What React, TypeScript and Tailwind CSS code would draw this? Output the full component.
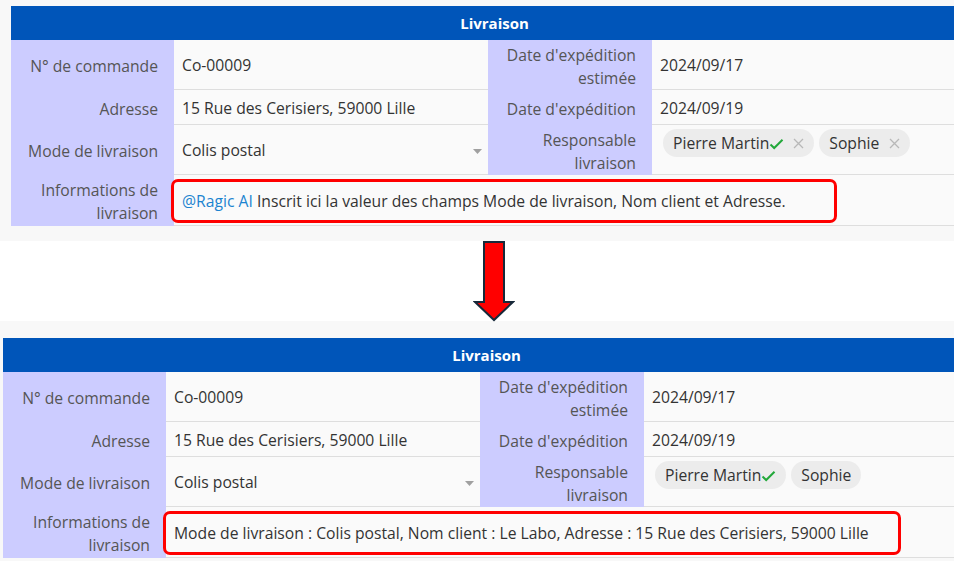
import React from "react";

type Chip = { name: string; confirmed?: boolean; removable?: boolean };

function Caret() {
  return (
    <svg width="9" height="5" viewBox="0 0 9 5" className="shrink-0">
      <path d="M0 0 L9 0 L4.5 5 Z" fill="#a0a0a0" />
    </svg>
  );
}

function Check() {
  return (
    <svg width="15" height="12" viewBox="0 0 15 12" className="shrink-0">
      <path d="M1.5 6.5 L5.2 10 L13.5 1.8" fill="none" stroke="#22a83a" strokeWidth="2" />
    </svg>
  );
}

function Cross() {
  return (
    <svg width="11" height="11" viewBox="0 0 11 11" className="shrink-0">
      <path d="M1 1 L10 10 M10 1 L1 10" fill="none" stroke="#b8b8b8" strokeWidth="1.3" />
    </svg>
  );
}

function Tag({ chip }: { chip: Chip }) {
  return (
    <div className="flex h-[28px] items-center rounded-full bg-[#ececec] pl-[10px] pr-[10px] pt-[1px] text-[#333]">
      <span>{chip.name}</span>
      {chip.confirmed && <Check />}
      {chip.removable && (
        <span className={chip.confirmed ? "ml-[9px]" : "ml-[10px]"}>
          <Cross />
        </span>
      )}
    </div>
  );
}

function Label({ children }: { children: React.ReactNode }) {
  return (
    <div className="flex items-center justify-end bg-[#ccccff] pr-[16px] pt-[3px] text-right leading-[23px] text-[#555]">
      {children}
    </div>
  );
}

function Value({ children, className = "pl-[8px] pt-[3px]" }: { children?: React.ReactNode; className?: string }) {
  return (
    <div className={`flex items-center border-b border-[#dedede] bg-[#fafafa] text-[#333] ${className}`}>
      {children}
    </div>
  );
}

function DeliveryPanel({
  offset,
  removable,
  info,
  boxWidth,
}: {
  offset: string;
  removable: boolean;
  info: React.ReactNode;
  boxWidth: string;
}) {
  const chips: Chip[] = [
    { name: "Pierre Martin", confirmed: true, removable },
    { name: "Sophie", removable },
  ];
  return (
    <div className={`w-[967px] shrink-0 ${offset}`}>
      <div className="flex h-[34px] items-center justify-center bg-[#0055b9] pt-[1px] text-[15px] font-bold text-white">
        Livraison
      </div>
      <div className="grid grid-cols-[163px_314px_164px_326px] grid-rows-[50px_35px_50px_51px]">
        <Label>N° de commande</Label>
        <Value>Co-00009</Value>
        <Label>
          Date d'expédition
          <br />
          estimée
        </Label>
        <Value>2024/09/17</Value>

        <Label>Adresse</Label>
        <Value>15 Rue des Cerisiers, 59000 Lille</Value>
        <Label>Date d'expédition</Label>
        <Value>2024/09/19</Value>

        <Label>Mode de livraison</Label>
        <Value className="justify-between pl-[8px] pr-[6px] pt-[3px]">
          <span>Colis postal</span>
          <Caret />
        </Value>
        <Label>
          Responsable
          <br />
          livraison
        </Label>
        <Value className="items-start gap-[5px] pl-[11px] pt-[4px]">
          {chips.map((c) => (
            <Tag key={c.name} chip={c} />
          ))}
        </Value>

        <Label>
          Informations de
          <br />
          livraison
        </Label>
        <Value className="col-span-3 pt-[2px]">
          <div
            className={`-ml-[3px] flex h-[44px] items-center rounded-[7px] border-[3px] border-[#ff0000] pl-[8px] pt-[1px] ${boxWidth}`}
          >
            {info}
          </div>
        </Value>
      </div>
    </div>
  );
}

export default function App() {
  return (
    <div className="h-[561px] w-[954px] overflow-hidden bg-white font-['Open_Sans',sans-serif] text-[15.7px]">
      <div className="flex bg-[#f8f8f8] pt-[6px] pb-[15px]">
        <DeliveryPanel
          offset="ml-[11px]"
          removable
          boxWidth="w-[666px]"
          info={
            <span>
              <span className="text-[#1c84d0]">@Ragic AI</span> Inscrit ici la valeur des champs Mode de
              livraison, Nom client et Adresse.
            </span>
          }
        />
      </div>

      <div className="flex h-[80px] justify-center">
        <svg width="42" height="81" viewBox="0 0 42 81" className="ml-[34px]">
          <path
            d="M11 1 L31 1 L31 61 L40 61 L21 79 L2 61 L11 61 Z"
            fill="#ff0000"
            stroke="#17293a"
            strokeWidth="2"
            strokeLinejoin="miter"
          />
        </svg>
      </div>

      <div className="flex h-[240px] bg-[#f8f8f8] pt-[17px]">
        <DeliveryPanel
          offset="ml-[3px]"
          removable={false}
          boxWidth="w-[738px]"
          info={
            <span>
              Mode de livraison : Colis postal, Nom client : Le Labo, Adresse : 15 Rue des Cerisiers, 59000 Lille
            </span>
          }
        />
      </div>
    </div>
  );
}
